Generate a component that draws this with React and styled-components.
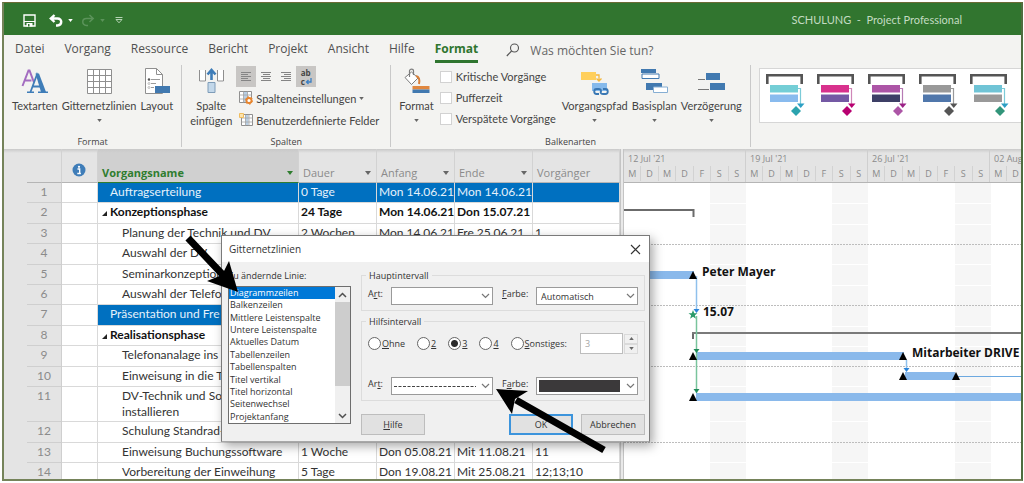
import React, { useState } from "react";
import styled, { createGlobalStyle, css } from "styled-components";

const GlobalStyle = createGlobalStyle`
  * {
    box-sizing: border-box;
  }
  body {
    margin: 0;
    background: #fff;
    font-family: "Open Sans", "Noto Sans", sans-serif;
    font-size: 12px;
    color: #444;
  }
  button, input, select {
    font: inherit;
    color: inherit;
  }
`;

const Window = styled.div`
  position: relative;
  display: flex;
  flex-direction: column;
  height: calc(100vh - 4px);
  margin: 2px 1px 2px 2px;
  border: 2px solid #75835a;
  border-top: 1px solid #6b6b35;
  border-right-color: #4f6d3f;
  overflow: hidden;
`;

/* ---------- title bar ---------- */

const TitleBar = styled.header`
  display: flex;
  align-items: center;
  flex-shrink: 0;
  height: 32px;
  padding: 0 59px 0 19px;
  background: #31752f;
  color: #c3dcc2;
  font-family: Lato, "Open Sans", sans-serif;
  font-size: 11px;
`;

const QuickButton = styled.button`
  display: flex;
  padding: 0;
  margin-right: ${(p) => p.$gap || 0}px;
  margin-top: 2px;
  border: none;
  background: none;
`;

const AppTitle = styled.div`
  margin-left: auto;
  white-space: pre;
`;

/* ---------- tabs ---------- */

const Tabs = styled.nav`
  display: flex;
  align-items: center;
  gap: 20px;
  flex-shrink: 0;
  height: 30px;
  padding: 0 11px;
  background: #f3f3f1;
`;

const Tab = styled.a`
  padding: 1px 0;
  line-height: 20px;
  text-decoration: none;
  color: #505050;
  border-bottom: 3px solid transparent;
  ${(p) =>
    p.$active &&
    css`
      color: #2f752f;
      font-weight: bold;
      border-bottom-color: #2f752f;
    `}
`;

const Search = styled.label`
  display: flex;
  align-items: center;
  gap: 10px;
  margin-left: 8px;

  input {
    width: 160px;
    padding: 0;
    border: none;
    background: none;
    outline: none;
  }
  input::placeholder {
    color: #666;
    opacity: 1;
  }
`;

/* ---------- ribbon ---------- */

const Ribbon = styled.div`
  display: flex;
  flex-shrink: 0;
  height: 84px;
  padding-bottom: 2px;
  background: #f3f3f1;
  font-family: Lato, "Open Sans", sans-serif;
  font-size: 11px;
`;

const Group = styled.section`
  display: flex;
  flex-direction: column;
  justify-content: space-between;
  flex-shrink: 0;
  padding: 1px 8px 0;
  border-right: 1px solid #c9c9c9;
`;

const GroupBody = styled.div`
  display: flex;
  align-items: flex-start;
  gap: 4px;
`;

const GroupLabel = styled.div`
  font-family: "Open Sans", sans-serif;
  font-size: 9px;
  line-height: 10px;
  text-align: center;
`;

const BigButton = styled.button`
  display: flex;
  flex-direction: column;
  align-items: center;
  padding: 2px 0 0;
  border: none;
  background: none;
  line-height: 15px;
  white-space: nowrap;

  svg:first-child {
    margin-bottom: 3px;
  }
`;

const CaretRow = styled.span`
  display: flex;
  align-items: center;
  height: 14px;

  && svg {
    margin: 0;
  }
`;

const Stack = styled.div`
  display: flex;
  flex-direction: column;
  padding: 0 ${(p) => p.$inset || 0}px;
`;

const AlignRow = styled.div`
  display: flex;
`;

const AlignButton = styled.button`
  display: flex;
  align-items: center;
  justify-content: center;
  width: 20px;
  height: 21px;
  padding: 0;
  border: none;
  background: ${(p) => (p.$pressed ? "#c8c6c4" : "none")};
`;

const SmallButton = styled.button`
  display: flex;
  align-items: center;
  gap: 3px;
  height: 22px;
  padding: 0 3px;
  border: none;
  background: none;
  white-space: nowrap;
`;

const Check = styled.label`
  display: flex;
  align-items: center;
  gap: 4px;
  height: 21px;

  input {
    appearance: none;
    width: 12px;
    height: 12px;
    margin: 0;
    border: 1px solid #d2d2d2;
    background: #fff;
  }
  input:checked {
    background: #2f752f;
  }
`;

const Gallery = styled.div`
  display: flex;
  flex: 1;
  gap: 12px;
  height: 55px;
  margin: 3px 0 0 8px;
  padding: 5px 6px;
  overflow: hidden;
  border: 1px solid #d6d6d6;
  border-right: none;
  background: #fff;
`;

const StyleButton = styled.button`
  display: flex;
  flex-shrink: 0;
  padding: 0;
  border: none;
  background: none;
`;

/* ---------- task sheet ---------- */

const Workspace = styled.main`
  display: flex;
  flex: 1;
  min-height: 0;
  overflow: hidden;
  background: #fff;
`;

const Gutter = styled.div`
  flex-shrink: 0;
  width: 23px;
  background: linear-gradient(#c9c9c9, #e4e4e4 4px);
`;

const Sheet = styled.table`
  flex-shrink: 0;
  width: 593px;
  height: max-content;
  table-layout: fixed;
  border-collapse: separate;
  border-spacing: 0;
  font-family: Lato, "Open Sans", sans-serif;
  color: #333;
`;

const HeadCell = styled.th`
  height: 34px;
  padding: 0 5px 2px 4px;
  vertical-align: bottom;
  text-align: left;
  font-family: "Open Sans", sans-serif;
  font-size: 11px;
  line-height: 14px;
  font-weight: ${(p) => (p.$selected ? "bold" : "normal")};
  color: ${(p) => (p.$selected ? "#2f7d2f" : "#8b8b8b")};
  background: linear-gradient(
    #c9c9c9,
    ${(p) => (p.$selected ? "#d0d0d0" : "#e4e4e4")} 4px
  );
  border-right: 1px solid #d2d2d2;
  border-bottom: 1px solid ${(p) => (p.$selected ? "#2f7d2f" : "#b5b5b5")};
`;

const HeadInner = styled.div`
  display: flex;
  align-items: center;
  justify-content: ${(p) => (p.$center ? "center" : "space-between")};
  padding-bottom: ${(p) => (p.$center ? 3 : 0)}px;
`;

const Row = styled.tr`
  height: ${(p) => (p.$tall ? 35 : 20)}px;
  font-weight: ${(p) => (p.$phase ? "bold" : "normal")};
  color: ${(p) => (p.$phase ? "#111" : "inherit")};

  &:nth-child(5n + 2),
  &:nth-child(5n + 4) {
    height: 21px;
  }
`;

const Cell = styled.td`
  padding: 1px 0 0 2px;
  vertical-align: top;
  line-height: 16px;
  white-space: nowrap;
  overflow: hidden;
  border-right: 1px solid #d9d9d9;
  border-bottom: 1px solid #d9d9d9;
  ${(p) =>
    p.$selected &&
    css`
      color: #e6f2fb;
      background: #0070c0;
    `}
`;

const NameCell = styled(Cell)`
  padding-left: ${(p) => (p.$level === 2 ? 24 : 12)}px;
  white-space: pre-line;
`;

const RowNumber = styled.th`
  padding-top: 1px;
  vertical-align: top;
  line-height: 16px;
  font-weight: normal;
  color: #8b8b8b;
  background: #e4e4e4;
  border-right: 1px solid #cfcfcf;
  border-bottom: 1px solid #cfcfcf;
`;

const Outline = styled.span`
  display: inline-block;
  width: 8px;
  margin-left: -8px;
  line-height: 5px;
  vertical-align: middle;
`;

const Splitter = styled.div`
  flex-shrink: 0;
  width: 4px;
  border-left: 1px solid #c4c4c4;
  border-right: 1px solid #c4c4c4;
  background: #e9e9e9;
`;

/* ---------- gantt ---------- */

const Gantt = styled.section`
  display: flex;
  flex-direction: column;
  flex: 1;
  min-width: 0;
`;

const Timescale = styled.div`
  display: flex;
  flex-shrink: 0;
  height: 34px;
  overflow: hidden;
  background: linear-gradient(#c9c9c9, #e4e4e4 4px);
  border-bottom: 1px solid #b5b5b5;
  color: #8b8b8b;
  font-size: 9px;
`;

const Week = styled.div`
  flex-shrink: 0;
  width: 122px;
  padding-top: 3px;
  border-right: 1px solid #cfcfcf;
`;

const WeekLabel = styled.div`
  padding-left: 4px;
  line-height: 14px;
`;

const Days = styled.div`
  display: flex;

  span {
    flex: 1;
    text-align: center;
    line-height: 15px;
    border-left: 1px solid #d2d2d2;
  }
  span:first-child {
    border-left: none;
  }
`;

const Chart = styled.svg`
  flex: 1;
  width: 100%;
  min-height: 0;
  font-weight: bold;
  font-size: 12px;
`;

/* ---------- dialog ---------- */

const Dialog = styled.div`
  position: absolute;
  left: 217px;
  top: 232px;
  width: 429px;
  border: 1px solid #7a7a7a;
  border-bottom-color: #a8a8a8;
  background: #f0f0f0;
  box-shadow: 3px 4px 10px rgba(0, 0, 0, 0.35);
  color: #333;
  font-size: 9px;
`;

const DialogTitle = styled.div`
  display: flex;
  align-items: center;
  justify-content: space-between;
  height: 26px;
  padding: 0 8px 0 7px;
  background: #fff;
  font-size: 10px;
`;

const CloseButton = styled.button`
  display: flex;
  padding: 0;
  border: none;
  background: none;
`;

const DialogBody = styled.div`
  display: flex;
  gap: 10px;
  padding: 7px 4px 6px 6px;
`;

const ListColumn = styled.div`
  width: 123px;
  flex-shrink: 0;
`;

const ListLabel = styled.div`
  padding-bottom: 3px;
  line-height: 14px;
`;

const ListFrame = styled.div`
  display: flex;
  height: 138px;
  border: 1px solid #6e6e6e;
  background: #fff;
`;

const List = styled.ul`
  display: grid;
  grid-auto-rows: 1fr;
  flex: 1;
  margin: 0;
  padding: 0;
  list-style: none;
  line-height: 12px;
`;

const ListItem = styled.li`
  padding-left: 1px;
  white-space: nowrap;
  cursor: default;
  color: ${(p) => (p.$selected ? "#fff" : "inherit")};
  background: ${(p) => (p.$selected ? "#0078d7" : "none")};
`;

const Scrollbar = styled.div`
  display: flex;
  flex-direction: column;
  width: 15px;
  background: #f0f0f0;
`;

const ScrollButton = styled.button`
  display: flex;
  align-items: center;
  justify-content: center;
  height: 15px;
  padding: 0;
  border: none;
  background: none;
`;

const ScrollTrack = styled.div`
  flex: 1;
`;

const ScrollThumb = styled.div`
  height: 84px;
  background: #cdcdcd;
`;

const Settings = styled.div`
  display: flex;
  flex-direction: column;
  flex: 1;
`;

const Fieldset = styled.fieldset`
  margin: 0 0 4px;
  padding: 5px 6px;
  min-width: 0;
  border: 1px solid #dcdcdc;

  legend {
    margin-left: -2px;
    padding: 0 3px;
    line-height: 13px;
  }
`;

const FieldRow = styled.div`
  display: flex;
  align-items: flex-start;
  justify-content: space-between;
  margin-top: ${(p) => p.$top || 0}px;
`;

const Field = styled.label`
  display: flex;
  gap: 6px;
  line-height: 13px;

  > span {
    min-width: ${(p) => p.$label}px;
  }
`;

const SelectBox = styled.div`
  position: relative;
  width: 102px;
  height: 18px;

  select {
    appearance: none;
    display: block;
    width: 100%;
    height: 100%;
    padding: 0 4px;
    border: 1px solid #9a9a9a;
    border-radius: 0;
    background: #fff;
  }
`;

/* preview of the line or colour plus the arrow, drawn over the select */
const SelectArt = styled.svg`
  position: absolute;
  inset: 0;
  width: 100%;
  height: 100%;
  pointer-events: none;
`;

const RadioRow = styled.div`
  display: flex;
  align-items: center;
`;

const Radio = styled.label`
  display: flex;
  align-items: center;
  gap: 1px;
  margin-right: ${(p) => p.$gap}px;

  input {
    appearance: none;
    width: 13px;
    height: 13px;
    margin: 0;
    border: 1px solid #666;
    border-radius: 50%;
    background: #fff;
  }
  input:checked {
    background: radial-gradient(#2b2b2b 0 3px, #fff 4px);
  }
`;

const OtherInput = styled.input`
  width: 43px;
  height: 21px;
  margin-left: auto;
  padding: 0 4px;
  border: 1px solid #bdbdbd;
  background: #fff;
  color: #a5a5a5;
`;

const Spinner = styled.div`
  display: flex;
  flex-direction: column;
  margin-left: 1px;

  button {
    display: flex;
    align-items: center;
    justify-content: center;
    width: 14px;
    height: 10px;
    padding: 0;
    border: 1px solid #dadada;
    background: #f0f0f0;
  }
`;

const Actions = styled.div`
  display: flex;
  gap: 8px;
  margin-top: 9px;
`;

const ActionButton = styled.button`
  width: 64px;
  height: 21px;
  padding: 0;
  border: ${(p) => (p.$default ? "2px solid #3c94dc" : "1px solid #bdbdbd")};
  background: #e1e1e1;

  &:first-child {
    margin-right: auto;
  }
`;

const Pointers = styled.svg`
  position: absolute;
  inset: 0;
  width: 100%;
  height: 100%;
  pointer-events: none;
`;

/* ---------- icons ---------- */

const Caret = ({ color = "#666", size = 5 }) => (
  <svg width={size} height={size - 2} viewBox="0 0 6 4">
    <path d="M0 0h6L3 4z" fill={color} />
  </svg>
);

const SaveIcon = () => (
  <svg width="13" height="13" viewBox="0 0 13 13">
    <path d="M1 1h11v11H1z" fill="none" stroke="#fff" strokeWidth="1.4" />
    <path d="M1 7h11v1H1zM3.5 9h6v3.5h-6z" fill="#fff" />
    <path d="M5 10h1.5v2.5H5z" fill="#31752f" />
  </svg>
);

const UndoIcon = ({ color = "#fff", flip, weight = 2.4 }) => (
  <svg width="14" height="13" viewBox="0 0 14 13">
    <g transform={flip ? "translate(14 0) scale(-1 1)" : undefined}>
      <path
        d="M5.5 1L1.8 4.5 5.5 8M2 4.5h6.5c5 0 5 6.5 0 7H7"
        fill="none"
        stroke={color}
        strokeWidth={weight}
      />
    </g>
  </svg>
);

const CustomizeIcon = () => (
  <svg width="8" height="7" viewBox="0 0 8 7">
    <path d="M.5.5h7" stroke="#b5d3b4" />
    <path d="M1 2.5h6L4 5.8z" fill="none" stroke="#b5d3b4" />
  </svg>
);

const SearchIcon = () => (
  <svg width="14" height="14" viewBox="0 0 14 14">
    <circle cx="8.5" cy="5" r="4" fill="none" stroke="#555" strokeWidth="1.1" />
    <path d="M5.6 8L.8 13" stroke="#555" strokeWidth="1.2" />
  </svg>
);

const TextStylesIcon = () => (
  <svg width="27" height="27" viewBox="0 0 27 27" fill="none">
    <path d="M1.5 18L7.5 2.5h1l4.5 12M3.5 12.5h7" stroke="#a36cc0" strokeWidth="2" />
    <path d="M9.5 24L16 6.5l7 17.5M11.5 18.5h9" stroke="#3f7db8" strokeWidth="1.8" />
    <path d="M14.5 5.5h3.5L25 24h-5z" fill="#3f7db8" />
    <path d="M6 24.3h7M17 24.3h10" stroke="#3f7db8" strokeWidth="1.6" />
  </svg>
);

const GridIcon = () => (
  <svg width="27" height="27" viewBox="0 0 27 27">
    <path
      d="M1.5 1.5h24v24h-24zM7.5 1.5v24M13.5 1.5v24M19.5 1.5v24M1.5 7.5h24M1.5 13.5h24M1.5 19.5h24"
      fill="#fff"
      stroke="#8f8f8f"
    />
  </svg>
);

const LayoutIcon = () => (
  <svg width="27" height="27" viewBox="0 0 27 27">
    <path d="M2.5.5h11l6 6v19h-17z" fill="#fff" stroke="#8f8f8f" />
    <path d="M13.5.5v6h6" fill="none" stroke="#8f8f8f" />
    <path d="M8 11.5h9M8 15.5h5M8 19.5h3" stroke="#9b9b9b" />
    <circle cx="6" cy="11.5" r="1.2" fill="#555" />
    <circle cx="6" cy="15.5" r="1" fill="none" stroke="#999" strokeWidth=".6" />
    <circle cx="6" cy="19.5" r="1" fill="none" stroke="#999" strokeWidth=".6" />
    <path d="M12 18h15v7H12z" fill="#4179b0" />
  </svg>
);

const InsertColumnIcon = () => (
  <svg width="27" height="27" viewBox="0 0 27 27">
    <path d="M1 2h7v11.5H1zM19 2h7v11.5h-7z" fill="#fff" />
    <path d="M1.5 2v11h6V2M19.5 2v11h6V2" fill="none" stroke="#8f8f8f" />
    <path d="M13.5 12V4M9.5 6.5l4-4.5 4 4.5" fill="none" stroke="#3f7db8" strokeWidth="2.6" />
    <path d="M10 14.5h7v10h-7z" fill="#c3d8ea" stroke="#7e9cb8" />
  </svg>
);

const AlignIcon = ({ mode }) => {
  const short = { left: 0, center: 2, right: 3 }[mode];
  return (
    <svg width="12" height="9" viewBox="0 0 12 9">
      <path
        d={`M1 .5h10M${1 + short} 2.5h7M1 4.5h10M${1 + short} 6.5h7M1 8.5h10`}
        stroke="#858585"
      />
    </svg>
  );
};

const WrapArrow = () => (
  <svg width="7" height="7" viewBox="0 0 7 7">
    <path d="M6 0v4H1.5M3.5 2l-2 2 2 2" fill="none" stroke="#3a7fc4" strokeWidth="1.3" />
  </svg>
);

const WrapLabel = styled.span`
  display: flex;
  flex-direction: column;
  font-family: "Open Sans", sans-serif;
  font-size: 8px;
  line-height: 9px;
  font-weight: bold;
  text-align: left;

  span {
    display: flex;
    align-items: center;
  }
`;

const ColumnSettingsIcon = () => (
  <svg width="14" height="14" viewBox="0 0 14 14">
    <path d="M.5.5h12v11H.5z" fill="#fff" stroke="#8f8f8f" />
    <path d="M4.5 1h4v10h-4z" fill="#b8cfe4" />
    <path d="M4.5.5v11M8.5.5v11M.5 4h12M.5 8h12" stroke="#a3a3a3" strokeWidth=".8" />
    <circle cx="10" cy="9.5" r="2.5" fill="#fff" stroke="#e8842c" strokeWidth="1.8" />
    <circle cx="10" cy="9.5" r="3.7" fill="none" stroke="#e8842c" strokeDasharray="1.8 2" />
  </svg>
);

const CustomFieldsIcon = () => (
  <svg width="14" height="14" viewBox="0 0 14 14">
    <path d="M2.5 1.5h11v11h-11z" fill="#fff" stroke="#8f8f8f" />
    <path d="M6.5 2h3v10h-3z" fill="#b8cfe4" />
    <path d="M6.5 1.5v11M10 1.5v11M2.5 5h11M2.5 9h11" stroke="#a3a3a3" strokeWidth=".8" />
    <path d="M.5.5h4v4h-4z" fill="#fbe3ae" stroke="#f0bd5e" />
  </svg>
);

const BarFormatIcon = () => (
  <svg width="27" height="27" viewBox="0 0 27 27">
    <path d="M2 9.5L8.5 4l6.5 6-6.5 6.5z" fill="#fff" stroke="#7d7d7d" />
    <path d="M6.5 9V3c0-2.5 4-2.5 4 0v4" fill="none" stroke="#7d7d7d" strokeWidth="1.2" />
    <path d="M13 8c3 .5 4 4 3 8" fill="none" stroke="#d9803a" strokeWidth="2" />
    <path d="M9.5 18h17v3.5h-17z" fill="#e0873f" />
    <path d="M9.5 21.5h17V25h-17z" fill="#4179b0" />
  </svg>
);

const TaskPathIcon = () => (
  <svg width="28" height="27" viewBox="0 0 28 27">
    <path d="M0 4h15v8H0z" fill="#ffcf5c" />
    <path d="M15 7h3v5M15.5 10.5L18 13l2.5-2.5" fill="none" stroke="#f5b73c" strokeWidth="1.3" />
    <path d="M11 15h15v8H11z" fill="#86baec" />
    <path
      d="M18 26h-2.5c-3 0-3-5 0-5H18c2 0 2.5 2 1.5 3M22 21h2.5c3 0 3 5 0 5H22c-2.5 0-3-2-1.5-3"
      fill="none"
      stroke="#3a78b4"
      strokeWidth="1.9"
    />
  </svg>
);

const BaselineIcon = () => (
  <svg width="27" height="27" viewBox="0 0 27 27">
    <path d="M0 1h15v4H0z" fill="#4179b0" />
    <path d="M1 6h17v4.5H1z" fill="#fff" stroke="#4179b0" />
    <path d="M5 15h16v7H5z" fill="#4179b0" />
    <path d="M12.5 19h14v5.5h-14z" fill="#fff" stroke="#86aed3" />
  </svg>
);

const DelayIcon = () => (
  <svg width="27" height="27" viewBox="0 0 27 27">
    <path d="M8 5h14v7H8zM12 15h15v7H12z" fill="#4179b0" />
    <path d="M0 11.5h7M0 21.5h11" stroke="#777" />
  </svg>
);

const InfoIcon = () => (
  <svg width="14" height="14" viewBox="0 0 14 14">
    <circle cx="7" cy="7" r="6.5" fill="#3f7db8" />
    <circle cx="7" cy="3.8" r="1.1" fill="#fff" />
    <path d="M5.5 6h2.2v4.5M5.3 10.5h3.6" fill="none" stroke="#fff" strokeWidth="1.3" />
  </svg>
);

const Chevron = ({ up }) => (
  <svg width="9" height="6" viewBox="0 0 9 6">
    <path
      d={up ? "M1 5l3.5-3.5L8 5" : "M1 1l3.5 3.5L8 1"}
      fill="none"
      stroke="#505050"
      strokeWidth="1.5"
    />
  </svg>
);

const CloseIcon = () => (
  <svg width="11" height="11" viewBox="0 0 11 11">
    <path d="M1 1l9 9M10 1l-9 9" stroke="#333" strokeWidth="1.1" />
  </svg>
);

const BarStyleIcon = ({ top, bottom, link, arrow, diamond }) => (
  <svg width="39" height="42" viewBox="0 0 39 42">
    <path d="M1.3 10V1.3h34.4V10" fill="none" stroke="#555" strokeWidth="2.6" />
    <path d="M4 11h28v7.5H4z" fill={top} />
    <path d="M4 20.5h28V28H4z" fill={bottom} />
    <path d="M32 14.5h2.5V30" fill="none" stroke={link} strokeWidth="1.2" />
    <path d="M31 29.5h7.5L34.7 34z" fill={arrow} />
    <path d="M30 32l5 5-5 5-5-5z" fill={diamond} />
  </svg>
);

/* ---------- data ---------- */

const tabs = [
  "Datei",
  "Vorgang",
  "Ressource",
  "Bericht",
  "Projekt",
  "Ansicht",
  "Hilfe",
  "Format",
];

const barStyles = [
  { top: "#74ced6", bottom: "#89bbee", link: "#7ccbd8", arrow: "#2b9fc4", diamond: "#2ba3ae" },
  { top: "#d8318d", bottom: "#7459a4", link: "#cf87b8", arrow: "#b80070", diamond: "#b80070" },
  { top: "#ac55a6", bottom: "#3d3f66", link: "#b67bb4", arrow: "#9b2186", diamond: "#ac55a6" },
  { top: "#999", bottom: "#5077ab", link: "#999", arrow: "#555", diamond: "#555" },
  { top: "#70c4d6", bottom: "#999", link: "#7ccbd8", arrow: "#2b9fc4", diamond: "#32957a" },
];

const tasks = [
  { name: "Auftragserteilung", level: 1, selected: true, cells: ["0 Tage", "Mon 14.06.21", "Mon 14.06.21", ""] },
  { name: "Konzeptionsphase", level: 1, phase: true, cells: ["24 Tage", "Mon 14.06.21", "Don 15.07.21", ""] },
  { name: "Planung der Technik und DV", level: 2, cells: ["2 Wochen", "Mon 14.06.21", "Fre 25.06.21", "1"] },
  { name: "Auswahl der DV", level: 2 },
  { name: "Seminarkonzeption", level: 2 },
  { name: "Auswahl der Telefo", level: 2 },
  { name: "Präsentation und Fre", level: 1, selected: true },
  { name: "Realisationsphase", level: 1, phase: true },
  { name: "Telefonanalage ins", level: 2 },
  { name: "Einweisung in die T", level: 2 },
  { name: "DV-Technik und So\ninstallieren", level: 2, tall: true },
  { name: "Schulung Standrad-", level: 2 },
  { name: "Einweisung Buchungssoftware", level: 2, cells: ["1 Woche", "Don 05.08.21", "Mit 11.08.21", "11"] },
  { name: "Vorbereitung der Einweihung", level: 2, cells: ["5 Tage", "Don 19.08.21", "Mit 25.08.21", "12;13;10"] },
];

const weeks = ["12 Jul '21", "19 Jul '21", "26 Jul '21", "02 Aug '21"];
const days = ["M", "D", "M", "D", "F", "S", "S"];

const lines = [
  "Diagrammzeilen",
  "Balkenzeilen",
  "Mittlere Leistenspalte",
  "Untere Leistenspalte",
  "Aktuelles Datum",
  "Tabellenzeilen",
  "Tabellenspalten",
  "Titel vertikal",
  "Titel horizontal",
  "Seitenwechsel",
  "Projektanfang",
];

const noCells = ["", "", "", ""];

/* ---------- parts ---------- */

function RibbonBar() {
  return (
    <Ribbon>
      <Group>
        <GroupBody>
          <BigButton>
            <TextStylesIcon />
            Textarten
          </BigButton>
          <BigButton>
            <GridIcon />
            Gitternetzlinien
            <CaretRow>
              <Caret />
            </CaretRow>
          </BigButton>
          <BigButton>
            <LayoutIcon />
            Layout
          </BigButton>
        </GroupBody>
        <GroupLabel>Format</GroupLabel>
      </Group>

      <Group>
        <GroupBody>
          <BigButton>
            <InsertColumnIcon />
            <span>Spalte</span>
            <span>einfügen</span>
          </BigButton>
          <Stack>
            <AlignRow>
              <AlignButton $pressed aria-label="Linksbündig">
                <AlignIcon mode="left" />
              </AlignButton>
              <AlignButton aria-label="Zentriert">
                <AlignIcon mode="center" />
              </AlignButton>
              <AlignButton aria-label="Rechtsbündig">
                <AlignIcon mode="right" />
              </AlignButton>
              <AlignButton $pressed>
                <WrapLabel>
                  <span>ab</span>
                  <span>
                    c<WrapArrow />
                  </span>
                </WrapLabel>
              </AlignButton>
            </AlignRow>
            <SmallButton>
              <ColumnSettingsIcon />
              Spalteneinstellungen <Caret />
            </SmallButton>
            <SmallButton>
              <CustomFieldsIcon />
              Benutzerdefinierte Felder
            </SmallButton>
          </Stack>
        </GroupBody>
        <GroupLabel>Spalten</GroupLabel>
      </Group>

      <Group>
        <GroupBody>
          <BigButton>
            <BarFormatIcon />
            Format
            <CaretRow>
              <Caret />
            </CaretRow>
          </BigButton>
          <Stack $inset={2}>
            <Check>
              <input type="checkbox" />
              Kritische Vorgänge
            </Check>
            <Check>
              <input type="checkbox" />
              Pufferzeit
            </Check>
            <Check>
              <input type="checkbox" />
              Verspätete Vorgänge
            </Check>
          </Stack>
          <BigButton>
            <TaskPathIcon />
            Vorgangspfad
            <CaretRow>
              <Caret />
            </CaretRow>
          </BigButton>
          <BigButton>
            <BaselineIcon />
            Basisplan
            <CaretRow>
              <Caret />
            </CaretRow>
          </BigButton>
          <BigButton>
            <DelayIcon />
            Verzögerung
            <CaretRow>
              <Caret />
            </CaretRow>
          </BigButton>
        </GroupBody>
        <GroupLabel>Balkenarten</GroupLabel>
      </Group>

      <Gallery>
        {barStyles.map((style, i) => (
          <StyleButton key={i} aria-label={`Balkenart ${i + 1}`}>
            <BarStyleIcon {...style} />
          </StyleButton>
        ))}
      </Gallery>
    </Ribbon>
  );
}

function TaskSheet() {
  return (
    <Sheet>
      <colgroup>
        <col width="35" />
        <col width="36" />
        <col width="201" />
        <col width="78" />
        <col width="78" />
        <col width="78" />
        <col />
      </colgroup>
      <thead>
        <tr>
          <HeadCell />
          <HeadCell>
            <HeadInner $center>
              <InfoIcon />
            </HeadInner>
          </HeadCell>
          <HeadCell $selected>
            <HeadInner>
              Vorgangsname <Caret color="#2f7d2f" size={6} />
            </HeadInner>
          </HeadCell>
          {["Dauer", "Anfang", "Ende"].map((label) => (
            <HeadCell key={label}>
              <HeadInner>
                {label} <Caret size={6} />
              </HeadInner>
            </HeadCell>
          ))}
          <HeadCell>Vorgänger</HeadCell>
        </tr>
      </thead>
      <tbody>
        {tasks.map((task, i) => (
          <Row key={i} $phase={task.phase} $tall={task.tall}>
            <RowNumber>{i + 1}</RowNumber>
            <Cell />
            <NameCell $level={task.level} $selected={task.selected}>
              {task.phase && (
                <Outline>
                  <svg width="5" height="5" viewBox="0 0 5 5">
                    <path d="M5 0v5H0z" fill="#222" />
                  </svg>
                </Outline>
              )}
              {task.name}
            </NameCell>
            {(task.cells || noCells).map((text, j) => (
              <Cell key={j} $selected={task.selected}>
                {text}
              </Cell>
            ))}
          </Row>
        ))}
      </tbody>
    </Sheet>
  );
}

const Marker = ({ x, y }) => <path d={`M${x} ${y}l4 8h-8z`} fill="#000" />;

const LinkHead = ({ x, y, color }) => (
  <path d={`M${x - 3} ${y}h6l-3 4z`} fill={color} />
);

function GanttChart() {
  return (
    <Gantt>
      <Timescale>
        {weeks.map((week) => (
          <Week key={week}>
            <WeekLabel>{week}</WeekLabel>
            <Days>
              {days.map((day, i) => (
                <span key={i}>{day}</span>
              ))}
            </Days>
          </Week>
        ))}
      </Timescale>
      <Chart>
        {[86, 208, 331].map((x) => (
          <rect key={x} x={x} y="0" width="36" height="100%" fill="#f6f6f6" />
        ))}
        {[20, 41, 81, 102, 143, 163, 203, 238, 279].map((y) => (
          <rect key={y} x="0" y={y} width="100%" height="1" fill="#fff" />
        ))}
        {[61, 122, 183, 259].map((y) => (
          <line
            key={y}
            x1="0"
            x2="100%"
            y1={y + 0.5}
            y2={y + 0.5}
            stroke="#bdbdbd"
            strokeDasharray="2 1"
          />
        ))}

        <path d="M0 27h69.5v7" fill="none" stroke="#6b6b6b" strokeWidth="2" />

        <rect x="0" y="88" width="70" height="8" fill="#8ab9eb" />
        <path d="M72.5 93v33" stroke="#8fc0ec" strokeWidth="1.5" />
        <LinkHead x={72.5} y={126} color="#2b84d8" />
        <Marker x={69} y={88} />
        <text x="78" y="93" fill="#111">
          Peter Mayer
        </text>

        <path
          d="M69 127l1.2 3.2h3.3l-2.6 2.1 1 3.4-2.9-2-2.9 2 1-3.4-2.6-2.1h3.3z"
          fill="#2b9a6a"
        />
        <text x="79" y="133" fill="#111">
          15.07
        </text>

        <rect x="72" y="169" width="208" height="8" fill="#8ab9eb" />
        <rect x="281" y="189" width="50" height="8" fill="#8ab9eb" />
        <rect x="72" y="210" width="100%" height="8" fill="#8ab9eb" />

        <path d="M69 156v-7" stroke="#6b6b6b" strokeWidth="2" />
        <rect x="68" y="149" width="100%" height="2" fill="#7a7a7a" />

        <path d="M72.5 133v77" stroke="#79c49c" strokeWidth="1.5" />
        <LinkHead x={72.5} y={166} color="#1f8a58" />
        <LinkHead x={72.5} y={206} color="#1f8a58" />

        <path d="M282.5 177v9" stroke="#8fc0ec" strokeWidth="1.5" />
        <LinkHead x={282.5} y={185} color="#2b84d8" />
        <rect x="334" y="193" width="100%" height="1" fill="#6da9e0" />

        <Marker x={69} y={169} />
        <Marker x={279} y={169} />
        <Marker x={279} y={189} />
        <Marker x={332} y={189} />
        <Marker x={69} y={210} />
        <text x="288" y="174" fill="#111">
          Mitarbeiter DRIVE
        </text>
      </Chart>
    </Gantt>
  );
}

const SelectChevron = () => (
  <path d="M91 7l3.5 3.5L98 7" fill="none" stroke="#777" strokeWidth="1.2" />
);

function GridlinesDialog() {
  const [line, setLine] = useState("Diagrammzeilen");
  const [interval, setInterval] = useState("3");

  return (
    <Dialog role="dialog" aria-label="Gitternetzlinien">
      <DialogTitle>
        Gitternetzlinien
        <CloseButton aria-label="Schließen">
          <CloseIcon />
        </CloseButton>
      </DialogTitle>
      <DialogBody>
        <ListColumn>
          <ListLabel id="line-label">Zu ändernde Linie:</ListLabel>
          <ListFrame>
            <List role="listbox" aria-labelledby="line-label">
              {lines.map((name) => (
                <ListItem
                  key={name}
                  role="option"
                  aria-selected={name === line}
                  $selected={name === line}
                  onClick={() => setLine(name)}
                >
                  {name}
                </ListItem>
              ))}
            </List>
            <Scrollbar>
              <ScrollButton aria-label="Nach oben">
                <Chevron up />
              </ScrollButton>
              <ScrollTrack>
                <ScrollThumb />
              </ScrollTrack>
              <ScrollButton aria-label="Nach unten">
                <Chevron />
              </ScrollButton>
            </Scrollbar>
          </ListFrame>
        </ListColumn>

        <Settings>
          <Fieldset>
            <legend>Hauptintervall</legend>
            <FieldRow>
              <Field $label={17}>
                <span>
                  A<u>r</u>t:
                </span>
                <SelectBox>
                  <select>
                    <option></option>
                  </select>
                  <SelectArt>
                    <SelectChevron />
                  </SelectArt>
                </SelectBox>
              </Field>
              <Field $label={28}>
                <span>
                  <u>F</u>arbe:
                </span>
                <SelectBox>
                  <select>
                    <option>Automatisch</option>
                  </select>
                  <SelectArt>
                    <SelectChevron />
                  </SelectArt>
                </SelectBox>
              </Field>
            </FieldRow>
          </Fieldset>

          <Fieldset>
            <legend>Hilfsintervall</legend>
            <RadioRow>
              {[
                ["Ohne", 12],
                ["2", 12],
                ["3", 12],
                ["4", 12],
                ["Sonstiges:", 0],
              ].map(([label, gap]) => (
                <Radio key={label} $gap={gap}>
                  <input
                    type="radio"
                    name="interval"
                    checked={interval === label}
                    onChange={() => setInterval(label)}
                  />
                  <span>
                    <u>{label[0]}</u>
                    {label.slice(1)}
                  </span>
                </Radio>
              ))}
              <OtherInput aria-label="Sonstiges" defaultValue="3" disabled />
              <Spinner>
                <button aria-label="Mehr">
                  <svg width="5" height="3" viewBox="0 0 6 4">
                    <path d="M0 4h6L3 0z" fill="#666" />
                  </svg>
                </button>
                <button aria-label="Weniger">
                  <Caret />
                </button>
              </Spinner>
            </RadioRow>
            <FieldRow $top={23}>
              <Field $label={17}>
                <span>
                  Ar<u>t</u>:
                </span>
                <SelectBox>
                  <select>
                    <option></option>
                  </select>
                  <SelectArt>
                    <path d="M3 9.5h82" stroke="#444" strokeDasharray="3 1.5" />
                    <SelectChevron />
                  </SelectArt>
                </SelectBox>
              </Field>
              <Field $label={28}>
                <span>
                  F<u>a</u>rbe:
                </span>
                <SelectBox>
                  <select>
                    <option></option>
                  </select>
                  <SelectArt>
                    <rect x="3" y="3" width="81" height="12" fill="#3b393a" />
                    <SelectChevron />
                  </SelectArt>
                </SelectBox>
              </Field>
            </FieldRow>
          </Fieldset>

          <Actions>
            <ActionButton>
              <u>H</u>ilfe
            </ActionButton>
            <ActionButton $default>OK</ActionButton>
            <ActionButton>Abbrechen</ActionButton>
          </Actions>
        </Settings>
      </DialogBody>
    </Dialog>
  );
}

function App() {
  return (
    <>
      <GlobalStyle />
      <Window>
        <TitleBar>
          <QuickButton $gap={13} aria-label="Speichern">
            <SaveIcon />
          </QuickButton>
          <QuickButton $gap={5} aria-label="Rückgängig">
            <UndoIcon />
          </QuickButton>
          <QuickButton $gap={8} aria-label="Rückgängig Liste">
            <Caret color="#fff" />
          </QuickButton>
          <QuickButton $gap={5} aria-label="Wiederholen">
            <UndoIcon color="#5b935a" flip weight={1.5} />
          </QuickButton>
          <QuickButton $gap={10} aria-label="Wiederholen Liste">
            <Caret color="#5b935a" />
          </QuickButton>
          <QuickButton aria-label="Anpassen">
            <CustomizeIcon />
          </QuickButton>
          <AppTitle>{"SCHULUNG  -  Project Professional"}</AppTitle>
        </TitleBar>

        <Tabs>
          {tabs.map((tab) => (
            <Tab key={tab} href="#" $active={tab === "Format"}>
              {tab}
            </Tab>
          ))}
          <Search>
            <SearchIcon />
            <input placeholder="Was möchten Sie tun?" />
          </Search>
        </Tabs>

        <RibbonBar />

        <Workspace>
          <Gutter />
          <TaskSheet />
          <Splitter />
          <GanttChart />
        </Workspace>

        <GridlinesDialog />

        <Pointers>
          <g transform="translate(-4 -3)">
            <path d="M188 238l36 38M604 450l-88-50" stroke="#000" strokeWidth="7" />
            <path d="M238 292l-31-11 15-6 7-14zM496 389l32 2-13 8-3 15z" />
          </g>
        </Pointers>
      </Window>
    </>
  );
}

export default App;
